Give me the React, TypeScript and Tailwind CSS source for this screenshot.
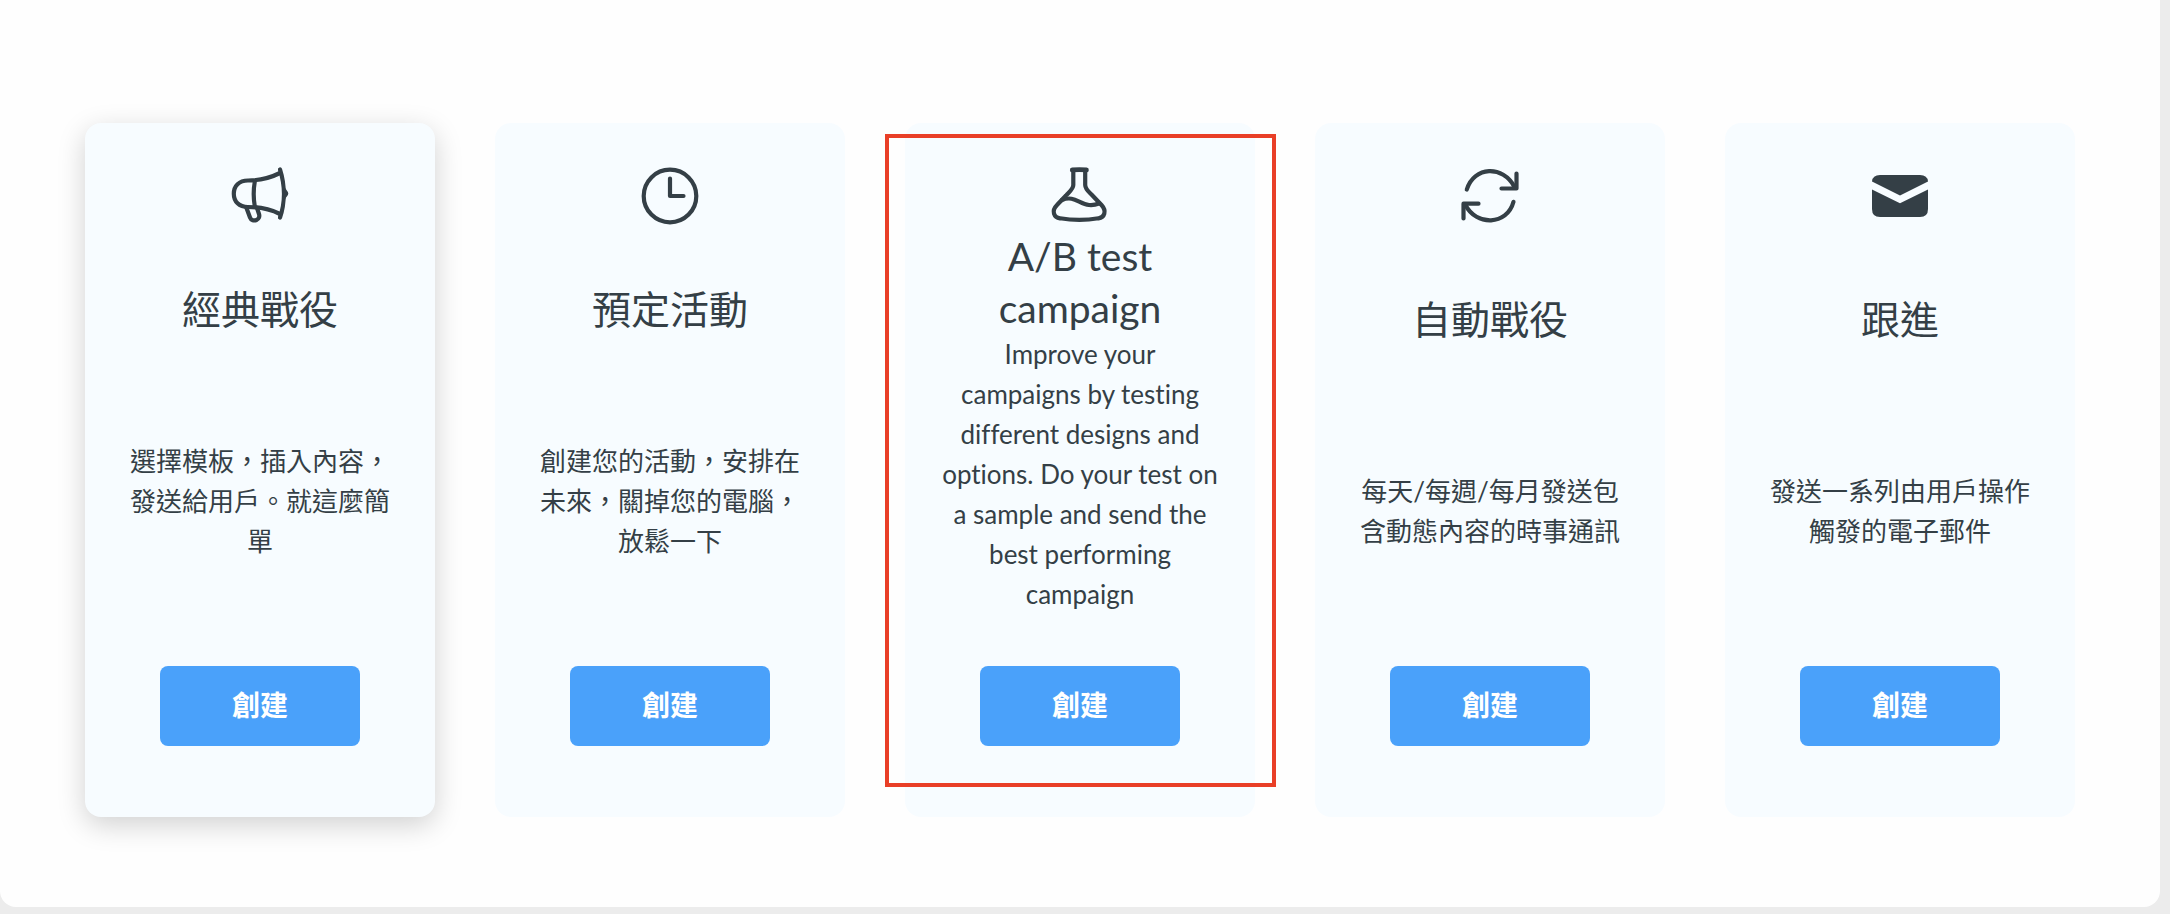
import type { ReactNode } from "react";

type Campaign = {
  id: string;
  title: string;
  description: string;
  icon: ReactNode;
  raised?: boolean;
  marked?: boolean;
};

const stroke = {
  fill: "none",
  stroke: "currentColor",
  strokeWidth: 4.2,
  strokeLinecap: "round" as const,
  strokeLinejoin: "round" as const,
};

function MegaphoneIcon() {
  return (
    <svg viewBox="0 0 60 60" className="size-15" aria-hidden="true" {...stroke}>
      <path d="M50 8C41 12.500 31 15.500 18 15.500C9 15.500 3.800 21 3.800 28.700C3.800 36.500 9 42 18 42C31 42 41 44.500 50 49" />
      <path d="M50 4.500C55 20 55 38 50 52.500" />
      <path d="M54.500 23.500C55 25.500 57.300 26.500 57.300 28.500C57.300 30.500 55 31.500 54.500 33.500Z" strokeWidth={2} fill="currentColor" />
      <path d="M24.800 16.500C23.300 25 23.300 33 24.800 41.500" />
      <path d="M16.500 43L20 52.500C21 55.300 24 56 26.500 55C29 54 29.800 51.500 29 49L27 43" />
    </svg>
  );
}

function ClockIcon() {
  return (
    <svg viewBox="0 0 60 60" className="size-15" aria-hidden="true" {...stroke}>
      <circle cx="30" cy="31" r="26.300" />
      <path d="M30 13.500V31H43.500" />
    </svg>
  );
}

function FlaskIcon() {
  return (
    <svg viewBox="0 0 60 60" className="size-15" aria-hidden="true" {...stroke}>
      <path d="M22.300 4.900Q29.500 4.200 36.400 4.900" strokeWidth={4.800} />
      <path d="M23.300 6V20C23.300 24 19 27 16 30.500L7 40C1 46 4 52.500 10 53.300Q29.500 56.500 48.500 53.300C54.500 52.500 57 46 51.500 40L41.500 29.500C38.500 26.500 35.200 24 35.200 20V6" />
      <path d="M12 35C24 30 29 39 39 40Q44 40.500 49 38.500" />
    </svg>
  );
}

function RefreshIcon() {
  return (
    <svg viewBox="0 0 60 60" className="size-15" aria-hidden="true" {...stroke}>
      <path d="M6.800 24.500C14 1 43 0 54.500 22" />
      <path d="M56.500 8.500V23.500H41.500" />
      <path d="M53.500 36.800C47 61 16 61 5.500 40" />
      <path d="M3.500 53.500V38.700H18.500" />
    </svg>
  );
}

function MailIcon() {
  return (
    <svg viewBox="0 0 60 60" className="size-15" aria-hidden="true" fill="currentColor">
      <path d="M2 16.500Q2.500 10 10 10H50Q57.500 10 58 16.500L30 30.500Z" />
      <path d="M2 24.500L30 38.300L58 24.500V44Q58 52 50 52H10Q2 52 2 44Z" />
    </svg>
  );
}

const campaigns: Campaign[] = [
  {
    id: "classic",
    title: "經典戰役",
    description: "選擇模板，插入內容，發送給用戶。就這麼簡單",
    icon: <MegaphoneIcon />,
    raised: true,
  },
  {
    id: "scheduled",
    title: "預定活動",
    description: "創建您的活動，安排在未來，關掉您的電腦，放鬆一下",
    icon: <ClockIcon />,
  },
  {
    id: "ab-test",
    title: "A/B test campaign",
    description:
      "Improve your campaigns\u00a0by testing different designs and options. Do your test on a sample and send the best performing campaign",
    icon: <FlaskIcon />,
    marked: true,
  },
  {
    id: "automated",
    title: "自動戰役",
    description: "每天/每週/每月發送包含動態內容的時事通訊",
    icon: <RefreshIcon />,
  },
  {
    id: "follow-up",
    title: "跟進",
    description: "發送一系列由用戶操作觸發的電子郵件",
    icon: <MailIcon />,
  },
];

function CampaignCard({ campaign }: { campaign: Campaign }) {
  const { id, title, description, icon, raised, marked } = campaign;
  return (
    <article
      aria-labelledby={id}
      className={
        "relative flex flex-col items-center rounded-2xl bg-[#f7fcff] px-9 pt-[42px] pb-[71px] text-center text-[#343f46] " +
        (raised ? "shadow-[0_8px_28px_rgba(0,0,0,0.18)]" : "")
      }
    >
      {icon}
      <div className="mt-[5px] mb-[52px] flex w-full grow flex-col justify-around">
        <h2 id={id} className="text-[39px] leading-[52px]">
          {title}
        </h2>
        <p className="text-[26px] leading-10">{description}</p>
      </div>
      <button
        type="button"
        aria-describedby={id}
        className="h-20 w-[200px] cursor-pointer rounded-lg bg-[#4aa1fa] pb-0.5 text-[28px] font-bold text-white"
      >
        創建
      </button>
      {marked && (
        <div className="pointer-events-none absolute top-[11px] -right-[21px] bottom-[30px] -left-5 border-4 border-[#e93f27]" />
      )}
    </article>
  );
}

export default function App() {
  return (
    <div
      lang="zh-Hant"
      className="min-h-screen bg-[#ececec] pr-[10px] pb-[6px] font-['Lato','Noto_Sans_CJK_TC',sans-serif] [font-variant-ligatures:none]"
    >
      <main className="rounded-b-2xl bg-[#fefefe] px-[85px] pt-[123px] pb-[90px]">
        <div className="grid grid-cols-5 gap-[60px]">
          {campaigns.map((campaign) => (
            <CampaignCard key={campaign.id} campaign={campaign} />
          ))}
        </div>
      </main>
    </div>
  );
}
